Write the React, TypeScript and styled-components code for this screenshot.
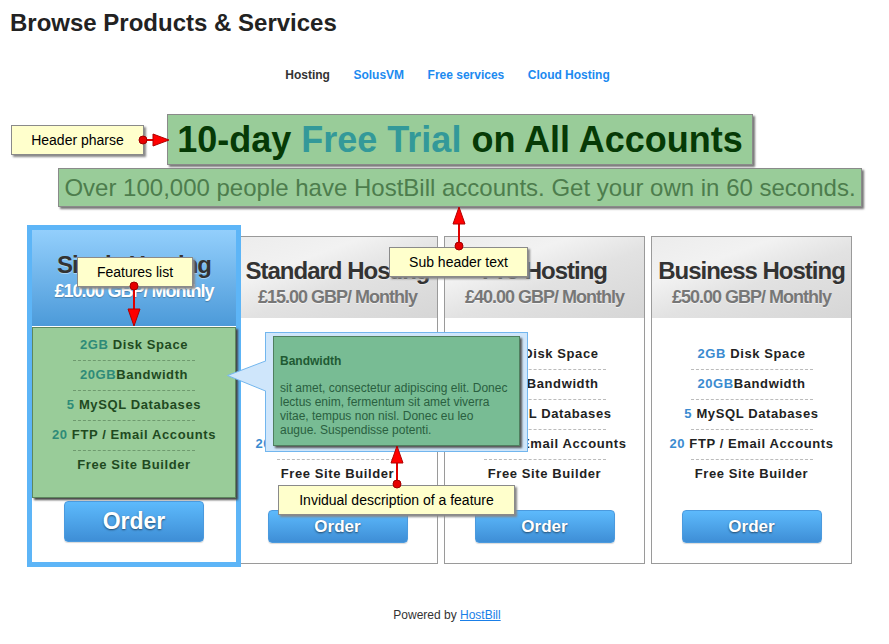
import React from 'react';
import styled, { createGlobalStyle } from 'styled-components';

const GlobalStyle = createGlobalStyle`
  html, body {
    margin: 0;
    padding: 0;
    background: #fff;
  }
  body {
    font-family: 'Liberation Sans', Arial, sans-serif;
    color: #333;
  }
`;

const plans = [
  { name: 'Single Hosting', price: '£10.00 GBP/ Monthly', featured: true },
  { name: 'Standard Hosting', price: '£15.00 GBP/ Monthly', featured: false },
  { name: 'Pro Hosting', price: '£40.00 GBP/ Monthly', featured: false },
  { name: 'Business Hosting', price: '£50.00 GBP/ Monthly', featured: false },
];

const features = [
  { num: '2GB', label: ' Disk Space' },
  { num: '20GB', label: 'Bandwidth' },
  { num: '5', label: ' MySQL Databases' },
  { num: '20', label: ' FTP / Email Accounts' },
  { num: '', label: 'Free Site Builder' },
];

const tabs = ['Hosting', 'SolusVM', 'Free services', 'Cloud Hosting'];

const Page = styled.div`
  position: relative;
  width: 889px;
  min-height: 644px;
`;

const Title = styled.h1`
  margin: 0;
  padding: 9px 10px 0;
  font-size: 24px;
  line-height: 28px;
  font-weight: bold;
  color: #222;
`;

const Tabs = styled.nav`
  display: flex;
  justify-content: center;
  gap: 23.5px;
  margin-top: 30px;
  padding-left: 6px;
`;

const Tab = styled.a<{ $active?: boolean }>`
  font-size: 12px;
  line-height: 16px;
  font-weight: bold;
  text-decoration: none;
  color: ${(p) => (p.$active ? '#333' : '#1c8af0')};
`;

const Banner = styled.div`
  display: flex;
  flex-direction: column;
  align-items: center;
  margin-top: 31px;
  padding-left: 31px;
`;

const HeaderPhrase = styled.div`
  padding: 0 9px;
  line-height: 49px;
  font-size: 36px;
  font-weight: bold;
  color: #063a06;
  background: #99cc99;
  border: 1px solid #8a8a8a;
  box-shadow: 2px 2px 2px #777;
  white-space: nowrap;

  span {
    color: #339999;
  }
`;

const SubHeader = styled.div`
  margin-top: 3px;
  padding: 0 5px;
  line-height: 37px;
  font-size: 24px;
  color: #4d7d4d;
  background: #99cc99;
  border: 1px solid #8a8a8a;
  box-shadow: 2px 2px 2px #777;
  white-space: nowrap;
`;

const Plans = styled.div`
  display: grid;
  grid-template-columns: repeat(4, 201px);
  column-gap: 6px;
  align-items: start;
  margin: 29px 0 0 30px;
`;

const Card = styled.div<{ $featured?: boolean }>`
  box-sizing: border-box;
  background: #fff;
  text-align: center;
  border: ${(p) => (p.$featured ? '5px solid #5db5f7' : '1px solid #9a9a9a')};
  ${(p) =>
    p.$featured &&
    `
    position: relative;
    z-index: 1;
    margin: -11px -10px -4px -3px;
  `}
`;

const CardHead = styled.div<{ $featured?: boolean }>`
  padding: ${(p) => (p.$featured ? '21px 2px 23px' : '20px 2px 10px')};
  background: ${(p) =>
    p.$featured
      ? 'linear-gradient(#93cffc, #4c9ad9)'
      : 'linear-gradient(160deg, #ececec 0%, #f2f2f2 30%, #e2e2e2 55%, #d6d6d6 100%)'};
`;

const PlanName = styled.div`
  font-size: 24px;
  line-height: 28px;
  font-weight: bold;
  letter-spacing: -1px;
  color: #333;
  white-space: nowrap;
  text-shadow: 0 1px 0 rgba(255, 255, 255, 0.4);
`;

const Price = styled.div<{ $featured?: boolean }>`
  margin-top: ${(p) => (p.$featured ? '0' : '1px')};
  font-size: 18px;
  line-height: ${(p) => (p.$featured ? '24px' : '22px')};
  font-weight: bold;
  letter-spacing: -1px;
  white-space: nowrap;
  color: ${(p) => (p.$featured ? '#fff' : '#777')};
  text-shadow: ${(p) =>
    p.$featured ? '0 1px 1px rgba(0, 0, 0, 0.25)' : '0 1px 0 rgba(255, 255, 255, 0.6)'};
`;

const FeatureList = styled.ul<{ $featured?: boolean }>`
  list-style: none;
  margin: ${(p) => (p.$featured ? '1px 0 0' : '0')};
  padding: ${(p) => (p.$featured ? '3px 0 16px' : '22px 0 0')};
  ${(p) =>
    p.$featured &&
    `
    background: #99cc99;
    border: 1px solid #5e875e;
    box-shadow: 2px 2px 2px #444;
  `}
`;

const Feature = styled.li<{ $featured?: boolean }>`
  position: relative;
  padding: 4px 0 7px;
  font-size: 13px;
  line-height: 19px;
  font-weight: bold;
  letter-spacing: 0.6px;
  white-space: nowrap;
  color: ${(p) => (p.$featured ? '#1f4a1f' : '#222')};

  span {
    color: ${(p) => (p.$featured ? '#2e8b78' : '#3b8bd0')};
  }

  &:not(:last-child)::after {
    content: '';
    position: absolute;
    left: 50%;
    bottom: 0;
    width: 122px;
    margin-left: -61px;
    border-top: 1px dashed ${(p) => (p.$featured ? '#6f9a6f' : '#bbb')};
  }
`;

const OrderButton = styled.button<{ $featured?: boolean }>`
  display: block;
  box-sizing: border-box;
  width: 140px;
  height: ${(p) => (p.$featured ? '41px' : '33px')};
  margin: ${(p) => (p.$featured ? '3px auto 20px' : '20px auto 20px')};
  padding: 0;
  border: 1px solid #4b9ade;
  border-radius: 4px;
  background: linear-gradient(#5dbafc, #3e8ed6);
  box-shadow: 0 1px 1px rgba(0, 0, 0, 0.15);
  font-family: 'Liberation Sans', Arial, sans-serif;
  font-size: ${(p) => (p.$featured ? '23px' : '17px')};
  font-weight: bold;
  color: #fff;
  text-shadow: 0 1px 2px rgba(0, 0, 0, 0.55);
  cursor: pointer;
`;

const Footer = styled.div`
  margin-top: 43px;
  padding-left: 5px;
  text-align: center;
  font-size: 12px;
  line-height: 16px;
  color: #333;

  a {
    color: #1a7fe8;
    text-decoration: underline;
  }
`;

/* description popup over the cards */
const Tooltip = styled.div`
  position: absolute;
  left: 265px;
  top: 332px;
  z-index: 5;
  box-sizing: border-box;
  width: 263px;
  height: 120px;
  padding: 3px 0 0 7px;
  background: #cfe6fb;
  border: 1px solid #72b6ee;
`;

const TipArrow = styled.svg`
  position: absolute;
  left: -39px;
  top: 28px;
  overflow: visible;
`;

const TipBody = styled.div`
  box-sizing: border-box;
  width: 247px;
  height: 110px;
  padding: 17px 6px 0 6px;
  background: #78bc94;
  border: 1px solid #4f7f5f;
  box-shadow: 2px 2px 2px #555;
  font-size: 12px;
  line-height: 14px;
  color: #2a6040;
  white-space: nowrap;
`;

const TipTitle = styled.div`
  font-weight: bold;
  color: #1f5a33;
  margin-bottom: 13px;
`;

/* yellow annotation notes */
const Note = styled.div<{ $x: number; $y: number; $w: number }>`
  position: absolute;
  left: ${(p) => p.$x}px;
  top: ${(p) => p.$y}px;
  width: ${(p) => p.$w}px;
  z-index: 8;
  box-sizing: border-box;
  height: 30px;
  line-height: 28px;
  text-align: center;
  font-size: 14px;
  color: #000;
  background: #ffffcc;
  border: 1px solid #8a8a8a;
  box-shadow: 2px 2px 2px #888;
  white-space: nowrap;
`;

const Connectors = styled.svg`
  position: absolute;
  left: 0;
  top: 0;
  z-index: 9;
  pointer-events: none;
`;

const Pointer = ({ dot, end, tip }: { dot: [number, number]; end: [number, number]; tip: [number, number] }) => {
  const [tx, ty] = tip;
  const [ex, ey] = end;
  const pts =
    tx === ex
      ? `${ex - 6},${ey} ${ex + 6},${ey} ${tx},${ty}`
      : `${ex},${ey - 6} ${ex},${ey + 6} ${tx},${ty}`;
  return (
    <g>
      <line x1={dot[0]} y1={dot[1]} x2={ex} y2={ey} stroke="#e00000" strokeWidth="2" />
      <polygon points={pts} fill="#ff0000" stroke="#b00000" strokeWidth="1" />
      <circle cx={dot[0]} cy={dot[1]} r="4" fill="#e60000" stroke="#a00000" strokeWidth="1" />
    </g>
  );
};

const App = () => {
  return (
    <Page>
      <GlobalStyle />
      <Title>Browse Products &amp; Services</Title>
      <Tabs>
        {tabs.map((t, i) => (
          <Tab key={t} href="#" $active={i === 0}>
            {t}
          </Tab>
        ))}
      </Tabs>

      <Banner>
        <HeaderPhrase>
          10-day <span>Free Trial</span> on All Accounts
        </HeaderPhrase>
        <SubHeader>Over 100,000 people have HostBill accounts. Get your own in 60 seconds.</SubHeader>
      </Banner>

      <Plans>
        {plans.map((plan) => (
          <Card key={plan.name} $featured={plan.featured}>
            <CardHead $featured={plan.featured}>
              <PlanName>{plan.name}</PlanName>
              <Price $featured={plan.featured}>{plan.price}</Price>
            </CardHead>
            <FeatureList $featured={plan.featured}>
              {features.map((f) => (
                <Feature key={f.label} $featured={plan.featured}>
                  {f.num && <span>{f.num}</span>}
                  {f.label}
                </Feature>
              ))}
            </FeatureList>
            <OrderButton $featured={plan.featured}>Order</OrderButton>
          </Card>
        ))}
      </Plans>

      <Footer>
        Powered by <a href="#">HostBill</a>
      </Footer>

      <Tooltip>
        <TipArrow width="41" height="31">
          <polygon points="0,14.5 39,0 41,0 41,30 39,30" fill="#cfe6fb" />
          <polyline points="38.5,0 0.5,14.5 38.5,30" fill="none" stroke="#72b6ee" strokeWidth="1" />
        </TipArrow>
        <TipBody>
          <TipTitle>Bandwidth</TipTitle>
          sit amet, consectetur adipiscing elit. Donec
          <br />
          lectus enim, fermentum sit amet viverra
          <br />
          vitae, tempus non nisl. Donec eu leo
          <br />
          augue. Suspendisse potenti.
        </TipBody>
      </Tooltip>

      <Note $x={11} $y={125} $w={133}>Header pharse</Note>
      <Note $x={77} $y={257} $w={116}>Features list</Note>
      <Note $x={389} $y={247} $w={139}>Sub header text</Note>
      <Note $x={278} $y={485} $w={237}>Invidual description of a feature</Note>

      <Connectors width="889" height="644">
        <Pointer dot={[143, 140]} end={[153, 140]} tip={[169, 140]} />
        <Pointer dot={[134, 286]} end={[134, 309]} tip={[134, 326]} />
        <Pointer dot={[459, 246]} end={[459, 224]} tip={[459, 207]} />
        <Pointer dot={[397, 484]} end={[397, 463]} tip={[397, 446]} />
      </Connectors>
    </Page>
  );
};

export default App;
